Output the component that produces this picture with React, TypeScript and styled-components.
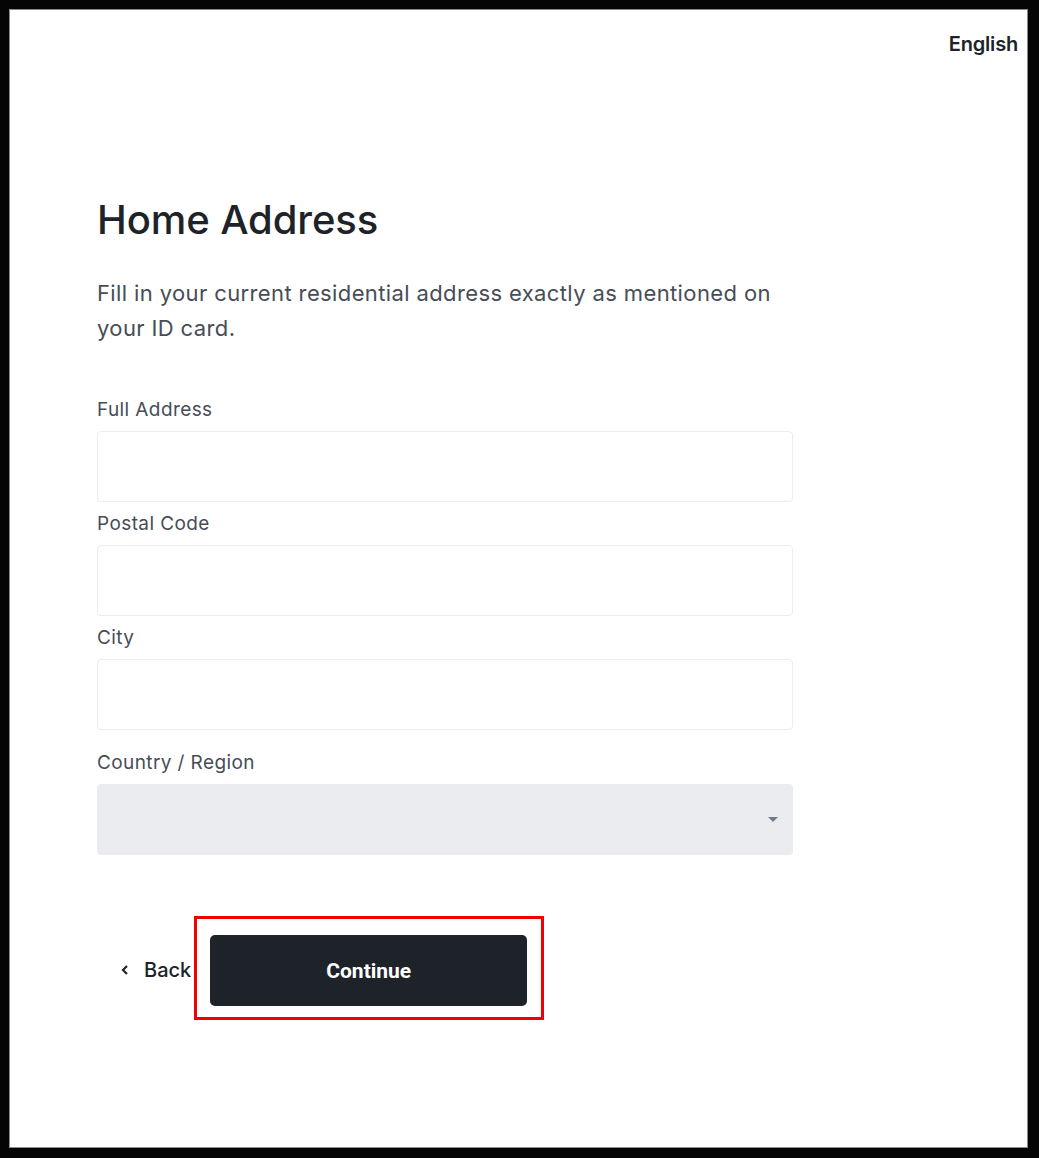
import { createGlobalStyle } from 'styled-components'
import styled from 'styled-components'

const GlobalStyle = createGlobalStyle`
  html, body {
    margin: 0;
    padding: 0;
    background: #050505;
  }
  body {
    font-family: Inter, "Noto Sans", "Liberation Sans", sans-serif;
  }
`

const Frame = styled.div`
  box-sizing: border-box;
  width: 1039px;
  height: 1158px;
  padding: 9px 11px 10px 9px;
  background: #050505;
`

const Panel = styled.div`
  box-sizing: border-box;
  height: 100%;
  background: #ffffff;
  border: 1px solid #8a8a8a;
  display: flex;
  flex-direction: column;
`

const TopBar = styled.div`
  display: flex;
  justify-content: flex-end;
  padding: 22px 9px 0 0;
`

const LangButton = styled.span`
  font-size: 20px;
  font-weight: 600;
  line-height: 24px;
  color: #1e2329;
  letter-spacing: -0.2px;
`

const Content = styled.div`
  width: 696px;
  margin: 140px 0 0 87px;
  display: flex;
  flex-direction: column;
`

const Title = styled.h1`
  margin: 0;
  font-size: 40px;
  font-weight: 500;
  line-height: 48px;
  color: #1e2329;
  letter-spacing: -0.1px;
`

const Subtitle = styled.p`
  margin: 32px 0 0;
  width: 696px;
  font-size: 22px;
  font-weight: 400;
  line-height: 35px;
  color: #474d57;
  letter-spacing: 0.38px;
`

const Fields = styled.div`
  margin-top: 52px;
  display: flex;
  flex-direction: column;
`

const Field = styled.label<{ $gapTop?: number }>`
  display: flex;
  flex-direction: column;
  margin-top: ${({ $gapTop }) => $gapTop ?? 10}px;
  &:first-child {
    margin-top: 0;
  }
`

const Label = styled.span`
  font-size: 19px;
  line-height: 24px;
  color: #474d57;
  margin-bottom: 9px;
  letter-spacing: 0.4px;
`

const Input = styled.input`
  box-sizing: border-box;
  height: 71px;
  width: 100%;
  border: 1px solid #eaecef;
  border-radius: 4px;
  background: #ffffff;
  outline: none;
  padding: 0 16px;
  font: inherit;
`

const Select = styled.div`
  box-sizing: border-box;
  height: 71px;
  width: 100%;
  border-radius: 4px;
  background: #eaecef;
  display: flex;
  align-items: center;
  justify-content: flex-end;
  padding-right: 15px;
`

const Caret = styled.span`
  width: 0;
  height: 0;
  border-left: 5px solid transparent;
  border-right: 5px solid transparent;
  border-top: 5px solid #707a8a;
`

const Actions = styled.div`
  margin-top: 61px;
  display: flex;
  align-items: center;
`

const BackLink = styled.button`
  display: flex;
  align-items: center;
  gap: 14px;
  margin: 3px 0 0 23px;
  padding: 0;
  border: none;
  background: none;
  font-family: Inter, "Liberation Sans", sans-serif;
  font-size: 20px;
  font-weight: 500;
  color: #1e2329;
  cursor: pointer;
`

const Highlight = styled.div`
  margin-left: 3px;
  border: 3px solid #f00000;
  padding: 16px 14px 11px 13px;
`

const ContinueButton = styled.button`
  width: 317px;
  height: 71px;
  border: none;
  border-radius: 5px;
  background: #1e2329;
  color: #ffffff;
  font-family: Roboto, "Liberation Sans", sans-serif;
  font-size: 21px;
  font-weight: 700;
  cursor: pointer;
`

const ChevronLeft = () => (
  <svg width="10" height="12" viewBox="0 0 10 12" fill="none">
    <path d="M7 2L3 6l4 4" stroke="#1e2329" strokeWidth="2.2" />
  </svg>
)

const fields = [
  { label: 'Full Address', gap: 0 },
  { label: 'Postal Code', gap: 10 },
  { label: 'City', gap: 10 },
]

const App = () => {
  return (
    <>
      <GlobalStyle />
      <Frame>
        <Panel>
          <TopBar>
            <LangButton>English</LangButton>
          </TopBar>
          <Content>
            <Title>Home Address</Title>
            <Subtitle>
              Fill in your current residential address exactly as mentioned on your ID card.
            </Subtitle>
            <Fields>
              {fields.map((f) => (
                <Field key={f.label} $gapTop={f.gap}>
                  <Label>{f.label}</Label>
                  <Input type="text" />
                </Field>
              ))}
              <Field $gapTop={21}>
                <Label>Country / Region</Label>
                <Select>
                  <Caret />
                </Select>
              </Field>
            </Fields>
            <Actions>
              <BackLink type="button">
                <ChevronLeft />
                Back
              </BackLink>
              <Highlight>
                <ContinueButton type="button">Continue</ContinueButton>
              </Highlight>
            </Actions>
          </Content>
        </Panel>
      </Frame>
    </>
  )
}

export default App
